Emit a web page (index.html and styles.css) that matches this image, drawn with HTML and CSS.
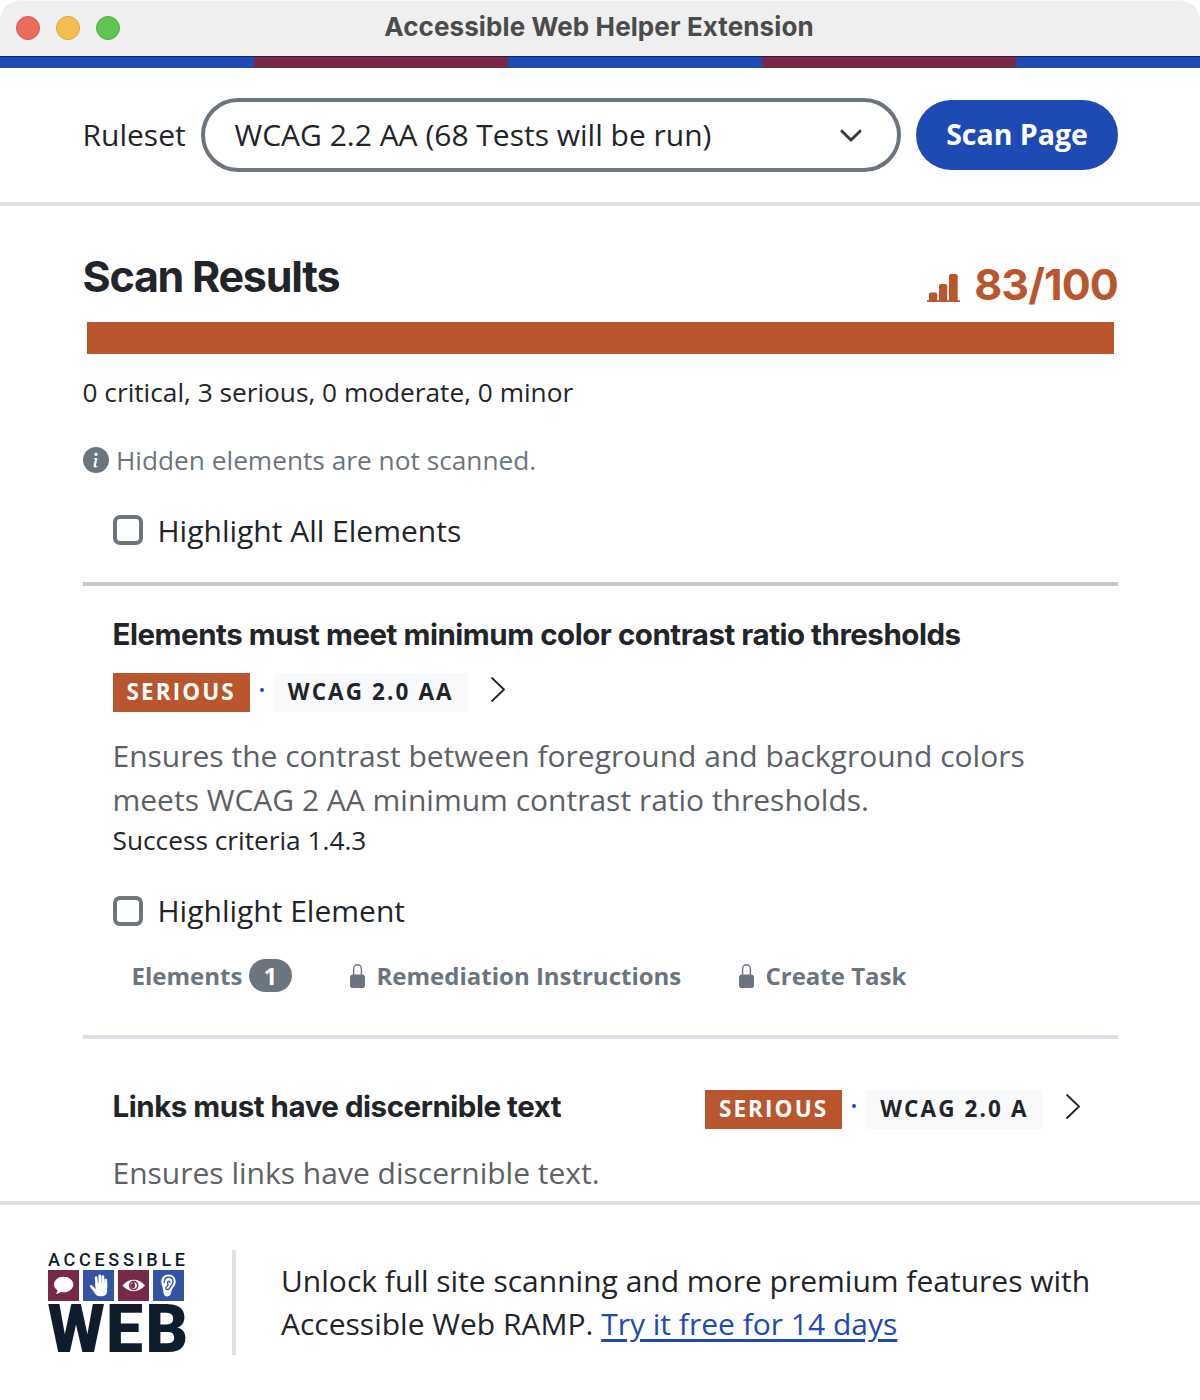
FILE: index.html
```html
<!DOCTYPE html>
<html lang="en">
<head>
<meta charset="utf-8">
<title>Accessible Web Helper Extension</title>
<link rel="stylesheet" href="styles.css">
</head>
<body>
<svg class="defs" width="0" height="0" aria-hidden="true">
  <symbol id="lock" viewBox="0 0 15 24">
    <path d="M3.6 12V4.9a3.9 4.1 0 0 1 7.8 0V12" fill="none" stroke="currentColor" stroke-width="1.4"/>
    <rect y="10.6" width="15" height="13.4" rx="2.8" fill="currentColor"/>
  </symbol>
  <symbol id="chevron" viewBox="0 0 14 25">
    <path d="M1 1 L13 12.5 L1 24" fill="none" stroke="currentColor" stroke-width="1.8" stroke-linecap="round" stroke-linejoin="round"/>
  </symbol>
</svg>
<div class="window">
  <div class="titlebar">
    <div class="lights"><span class="light red"></span><span class="light yellow"></span><span class="light green"></span></div>
    <div class="window-title">Accessible Web Helper Extension</div>
  </div>
  <div class="stripe"></div>
  <header class="toolbar">
    <span class="label">Ruleset</span>
    <div class="select">
      <span>WCAG 2.2 AA (68 Tests will be run)</span>
      <svg width="22" height="14" viewBox="0 0 22 14"><path d="M2 2.2 L11 11 L20 2.2" fill="none" stroke="#343a40" stroke-width="3" stroke-linecap="round" stroke-linejoin="round"/></svg>
    </div>
    <button class="scan">Scan Page</button>
  </header>
  <main class="results">
    <div class="heading">
      <h1>Scan Results</h1>
      <div class="score">
        <svg width="33" height="30" viewBox="0 0 33 30" fill="currentColor"><path d="M0 27.2h33v1.9H0zM2 27.5V21.500a2 2 0 0 1 2-2h4.200a2 2 0 0 1 2 2v6zM12 27.500v-14.500a2 2 0 0 1 2-2h4.200a2 2 0 0 1 2 2v14.500zM22 27.500V3a2 2 0 0 1 2-2h4.700a2 2 0 0 1 2 2v24.500z"/></svg>
        <span>83/100</span>
      </div>
    </div>
    <div class="bar"></div>
    <p class="counts">0 critical, 3 serious, 0 moderate, 0 minor</p>
    <p class="notice">
      <svg width="26" height="26" viewBox="0 0 16 16"><path fill="currentColor" d="M8 16A8 8 0 1 0 8 0a8 8 0 0 0 0 16zm.93-9.412-1 4.705c-.07.34.029.533.304.533.194 0 .487-.07.686-.246l-.088.416c-.287.346-.92.598-1.465.598-.703 0-1.002-.422-.808-1.319l.738-3.468c.064-.293.006-.399-.287-.47l-.451-.081.082-.381 2.290-.287zM8 5.500a1 1 0 1 1 0-2 1 1 0 0 1 0 2z"/></svg>
      <span>Hidden elements are not scanned.</span>
    </p>
    <label class="check"><span class="box"></span><span class="check-text">Highlight All Elements</span></label>
    <hr class="rule dark">
    <section class="item">
      <h2>Elements must meet minimum color contrast ratio thresholds</h2>
      <div class="tags">
        <span class="tag serious">SERIOUS</span><span class="dot"></span><span class="tag plain">WCAG 2.0 AA</span>
        <svg class="chevron" width="14" height="25"><use href="#chevron"/></svg>
      </div>
      <p class="description">Ensures the contrast between foreground and background colors<br>meets WCAG 2 AA minimum contrast ratio thresholds.</p>
      <p class="criteria">Success criteria 1.4.3</p>
      <label class="check"><span class="box"></span><span>Highlight Element</span></label>
      <nav class="actions">
        <a class="elements">Elements <span class="count">1</span></a>
        <a class="remediation"><svg width="15" height="24"><use href="#lock"/></svg>Remediation Instructions</a>
        <a><svg width="15" height="24"><use href="#lock"/></svg>Create Task</a>
      </nav>
    </section>
    <hr class="rule">
    <section class="item second">
      <div class="row">
        <h2>Links must have discernible text</h2>
        <div class="tags">
          <span class="tag serious">SERIOUS</span><span class="dot"></span><span class="tag plain">WCAG 2.0 A</span>
          <svg class="chevron" width="14" height="25"><use href="#chevron"/></svg>
        </div>
      </div>
      <p class="description">Ensures links have discernible text.</p>
    </section>
  </main>
  <footer class="promo">
    <svg class="logo" width="138" height="106" viewBox="0 0 138 106">
      <text class="logo-top" x="0" y="15.500" textLength="137">ACCESSIBLE</text>
      <path fill="#772949" d="M0 20h31v31H0zM70 20h31v31H70z"/>
      <path fill="#3353a4" d="M35 20h31v31H35zM105 20h31v31h-31z"/>
      <g transform="translate(0 2)">
        <path fill="#fff" d="M15.500 24.800c5.500 0 9.800 3.400 9.800 7.700s-4.300 7.800-9.800 7.800q-1.300 0-2.500-.3-2 1.800-5.300 1.900 1.700-1.500 1.800-3.700c-2.200-1.300-3.500-3.300-3.500-5.700 0-4.300 4.100-7.700 9.500-7.700z"/>
        <path fill="none" stroke="#fff" stroke-linecap="round" stroke-width="2.700" d="M48.800 34l-.7-8.500M51.800 33v-9.200M54.900 33v-8.400M57.800 36v-8M47.500 39l-4.300-4.700"/>
        <path fill="#fff" d="M47.500 31h11.700v7.500q-.4 5.700-5 5.700h-2.600q-3.200 0-4.800-3l-3.200-5 3.900 1z"/>
        <path fill="#fff" d="M74.500 33.500q5-5.700 11.200-5.700t11.300 5.700q-5 5.700-11.300 5.700t-11.200-5.700z"/>
        <circle cx="85.700" cy="33.500" r="4" fill="none" stroke="#772949" stroke-width="1.600"/>
        <path fill="#772949" d="M85.700 28.500l1.500 5a2.400 2.400 0 1 1-3-2z"/>
        <path fill="#fff" d="M120.500 22.500c4.300 0 7.200 3 7.200 7 0 5-3.400 6-4.200 9.500-.5 3-1.600 5.400-4.200 5.400-3.300 0-4-3.400-4.300-7-.2-2.700-1.700-4.500-1.700-7.700 0-4.200 2.900-7.200 7.200-7.200z"/>
        <path fill="none" stroke="#3353a4" stroke-width="1.400" stroke-linecap="round" d="M116.300 30.300c0-3 1.700-5 4.300-5s4.400 1.800 4.400 4.300c0 3.500-2.500 3.700-3.300 6.500-.6 1.700-3.200 2-3.800.4-.5-1.600 1.200-2 1.900-3.200.6-1.300-.4-2-.2-3.200.3-1.400 2.200-1.300 2.300.3"/>
      </g>
      <text class="logo-web" x="-0.500 58 97.500" y="102">WEB</text>
    </svg>
    <p class="pitch">Unlock full site scanning and more premium features with<br>Accessible Web RAMP. <a class="link">Try it free for 14 days</a></p>
  </footer>
</div>
</body>
</html>
```
FILE: styles.css
```css
* { box-sizing: border-box; }
body { margin: 0; background: #fff; font-family: "Open Sans", sans-serif; font-size: 30px; color: #212529; }
h1, h2, p { margin: 0; }
svg { display: block; flex: none; overflow: visible; }
.defs { position: absolute; }
.window { width: 1200px; height: 1400px; display: flex; flex-direction: column; overflow: hidden; white-space: nowrap; }

.titlebar { height: 56px; flex: none; display: grid; grid-template-columns: 200px 1fr 202px; align-items: center; background: #efefef; border-radius: 20px 20px 0 0; border-top: 1px solid #f8f8f8; }
.lights { display: flex; gap: 16px; padding: 0 0 1px 16px; }
.light { width: 24px; height: 24px; border-radius: 50%; border: 1px solid; }
.red { background: #ed6a5e; border-color: #d6574d; }
.yellow { background: #f5bf4f; border-color: #d9a440; }
.green { background: #61c554; border-color: #4fae42; }
.window-title { text-align: center; font: 700 26px/51px Inter, sans-serif; letter-spacing: .1px; color: #4b4b4b; padding-bottom: 4px; }
.stripe { height: 12px; flex: none; background: linear-gradient(rgba(0, 0, 60, .5) 1px, transparent 1px), repeating-linear-gradient(90deg, #1e4ab4 0 254px, #772847 254px 508px); }

.toolbar { height: 138px; flex: none; display: flex; align-items: center; padding: 0 82px 0 82.5px; border-bottom: 4px solid #dee2e6; }
.label { width: 118.5px; line-height: 40px; }
.select { width: 700px; height: 74px; border: 4px solid #6c757d; border-radius: 37px; display: flex; align-items: center; justify-content: space-between; padding: 0 35px 0 29.5px; }
.select span { padding-bottom: 2px; }
.select svg { margin-top: 2px; }
.scan { width: 202px; height: 70px; margin-left: auto; border: 0; border-radius: 35px; padding: 0 0 2px; background: #1e4ab4; color: #fff; font: 700 28.5px "Open Sans", sans-serif; }

.results { flex: 1; min-height: 0; overflow: hidden; padding: 0 82px 0 82.5px; }
.heading { height: 116px; display: flex; justify-content: space-between; }
h1 { font: 700 43px/60px Inter, sans-serif; padding-top: 40px; letter-spacing: -1.250px; }
.score { display: flex; gap: 14px; padding-top: 48px; font: 700 43px/60px Inter, sans-serif; letter-spacing: -.850px; color: #b9562d; }
.score svg { margin-top: 19px; }
.bar { height: 32px; margin: 0 4px; background: #b9562d; }
.counts { font-size: 26.250px; line-height: 40px; margin-top: 18px; }
.notice { display: flex; align-items: center; gap: 7.500px; font-size: 26.250px; line-height: 40px; margin-top: 28px; color: #6c757d; }
.check { display: flex; align-items: center; gap: 15px; height: 40px; line-height: 40px; }
.results > .check { margin: 30px 0 0 30px; }
.check-text { padding-top: 2px; }
.box { width: 30px; height: 30px; border: 4px solid #6c757d; border-radius: 7px; }
.rule { height: 4px; border: 0; margin: 0; background: #dee2e8; }
.dark { margin-top: 32px; background: #c7c7c7; }

.item { padding: 28px 30px 0; height: 449px; }
h2 { font: 700 29.500px/40px Inter, sans-serif; letter-spacing: -.470px; }
.tags { display: flex; align-items: center; margin-top: 19px; }
.tag { height: 39px; padding: 0 14px; font-weight: 700; font-size: 22.500px; line-height: 37px; letter-spacing: 2.100px; }
.serious { background: #b9562d; color: #fff; }
.plain { background: #f8f9fa; }
.dot { width: 4px; height: 4px; border-radius: 50%; background: #1e4ab4; margin: 0 10px; transform: translateY(-3px); }
.chevron { margin: -6px 0 0 23px; }
.description { font-size: 30px; line-height: 44px; color: #5c6166; margin-top: 22px; }
.criteria { font-size: 26.250px; line-height: 40px; margin-top: -2px; }
.item > .check { margin-top: 31px; }
.actions { display: flex; align-items: center; height: 34px; margin: 27px 0 0 19px; color: #6c757d; font-weight: 700; font-size: 24px; }
.actions a { display: flex; align-items: center; gap: 12px; }
.actions svg { margin-top: 1px; }
.actions .elements { gap: 6.500px; width: 218px; }
.actions .remediation { width: 389px; }
.count { width: 43px; height: 33px; line-height: 33px; border-radius: 17px; background: #6c757d; color: #fff; text-align: center; }

.second { padding-top: 47px; }
.row { height: 43px; display: flex; align-items: center; justify-content: space-between; padding-right: 8.500px; }
.row .tags { margin: 3px 0 0; }
.row h2 { padding-bottom: 3px; }
.second .description { margin-top: 22px; }

.promo { height: 199px; flex: none; display: flex; align-items: center; border-top: 4px solid #dee2e6; padding-left: 48px; }
.logo-top { font: 500 18px Roboto, sans-serif; fill: #0f1c2b; }
.logo-web { font: 900 66px Roboto, sans-serif; fill: #0f1c2b; }
.pitch { margin-left: 46px; border-left: 4px solid #dee2e6; padding: 9px 0 10px 45px; line-height: 43px; }
.link { color: #1e4ab4; text-decoration: underline; text-decoration-thickness: 3px; text-underline-offset: 4px; }
```
